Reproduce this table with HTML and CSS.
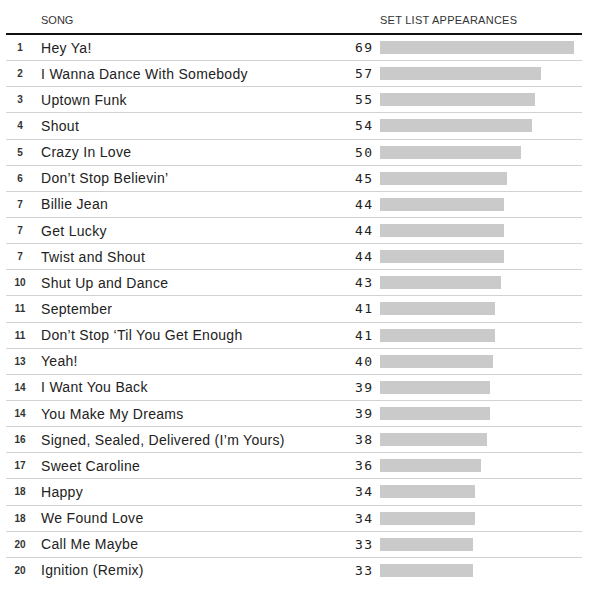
FILE: index.html
```html
<!DOCTYPE html>
<html>
<head>
<meta charset="utf-8">
<link rel="stylesheet" href="styles.css">
</head>
<body>
<div class="chart">
  <div class="head">
    <div class="h-rank"></div>
    <div class="h-song">SONG</div>
    <div class="h-num"></div>
    <div class="h-bar">SET LIST APPEARANCES</div>
  </div>
  <div class="row"><div class="rank">1</div><div class="song">Hey Ya!</div><div class="num">69</div><div class="bar-cell"><div class="bar" style="width:194px"></div></div></div>
  <div class="row"><div class="rank">2</div><div class="song">I Wanna Dance With Somebody</div><div class="num">57</div><div class="bar-cell"><div class="bar" style="width:161px"></div></div></div>
  <div class="row"><div class="rank">3</div><div class="song">Uptown Funk</div><div class="num">55</div><div class="bar-cell"><div class="bar" style="width:155px"></div></div></div>
  <div class="row"><div class="rank">4</div><div class="song">Shout</div><div class="num">54</div><div class="bar-cell"><div class="bar" style="width:152px"></div></div></div>
  <div class="row"><div class="rank">5</div><div class="song">Crazy In Love</div><div class="num">50</div><div class="bar-cell"><div class="bar" style="width:141px"></div></div></div>
  <div class="row"><div class="rank">6</div><div class="song">Don’t Stop Believin’</div><div class="num">45</div><div class="bar-cell"><div class="bar" style="width:127px"></div></div></div>
  <div class="row"><div class="rank">7</div><div class="song">Billie Jean</div><div class="num">44</div><div class="bar-cell"><div class="bar" style="width:124px"></div></div></div>
  <div class="row"><div class="rank">7</div><div class="song">Get Lucky</div><div class="num">44</div><div class="bar-cell"><div class="bar" style="width:124px"></div></div></div>
  <div class="row"><div class="rank">7</div><div class="song">Twist and Shout</div><div class="num">44</div><div class="bar-cell"><div class="bar" style="width:124px"></div></div></div>
  <div class="row"><div class="rank">10</div><div class="song">Shut Up and Dance</div><div class="num">43</div><div class="bar-cell"><div class="bar" style="width:121px"></div></div></div>
  <div class="row"><div class="rank">11</div><div class="song">September</div><div class="num">41</div><div class="bar-cell"><div class="bar" style="width:115px"></div></div></div>
  <div class="row"><div class="rank">11</div><div class="song">Don’t Stop ‘Til You Get Enough</div><div class="num">41</div><div class="bar-cell"><div class="bar" style="width:115px"></div></div></div>
  <div class="row"><div class="rank">13</div><div class="song">Yeah!</div><div class="num">40</div><div class="bar-cell"><div class="bar" style="width:113px"></div></div></div>
  <div class="row"><div class="rank">14</div><div class="song">I Want You Back</div><div class="num">39</div><div class="bar-cell"><div class="bar" style="width:110px"></div></div></div>
  <div class="row"><div class="rank">14</div><div class="song">You Make My Dreams</div><div class="num">39</div><div class="bar-cell"><div class="bar" style="width:110px"></div></div></div>
  <div class="row"><div class="rank">16</div><div class="song">Signed, Sealed, Delivered (I’m Yours)</div><div class="num">38</div><div class="bar-cell"><div class="bar" style="width:107px"></div></div></div>
  <div class="row"><div class="rank">17</div><div class="song">Sweet Caroline</div><div class="num">36</div><div class="bar-cell"><div class="bar" style="width:101px"></div></div></div>
  <div class="row"><div class="rank">18</div><div class="song">Happy</div><div class="num">34</div><div class="bar-cell"><div class="bar" style="width:95px"></div></div></div>
  <div class="row"><div class="rank">18</div><div class="song">We Found Love</div><div class="num">34</div><div class="bar-cell"><div class="bar" style="width:95px"></div></div></div>
  <div class="row"><div class="rank">20</div><div class="song">Call Me Maybe</div><div class="num">33</div><div class="bar-cell"><div class="bar" style="width:93px"></div></div></div>
  <div class="row last"><div class="rank">20</div><div class="song">Ignition (Remix)</div><div class="num">33</div><div class="bar-cell"><div class="bar" style="width:93px"></div></div></div>
</div>
</body>
</html>
```
FILE: styles.css
```css
html, body {
  margin: 0;
  padding: 0;
  background: #fff;
}
body {
  font-family: "Liberation Sans", Arial, sans-serif;
  color: #222;
}
.chart {
  margin-left: 6px;
  width: 576px;
}
.head, .row {
  display: grid;
  grid-template-columns: 28px 300px 38px 210px;
  align-items: center;
}
.head {
  height: 33px;
  border-bottom: 2px solid #111;
  box-sizing: content-box;
  align-items: end;
}
.h-song, .h-bar {
  font-size: 11px;
  line-height: 11px;
  color: #333;
  padding-bottom: 7px;
}
.h-song {
  padding-left: 7px;
}
.h-bar {
  padding-left: 8px;
  letter-spacing: 0.25px;
}
.row {
  height: 25.15px;
  border-bottom: 1px solid #d2d2d2;
}
.row.last {
  border-bottom: none;
}
.rank {
  text-align: center;
  font-size: 10px;
  font-weight: bold;
  color: #333;
}
.song {
  padding-left: 7px;
  font-size: 14px;
  letter-spacing: 0.3px;
  color: #222;
  white-space: nowrap;
}
.num {
  text-align: right;
  font-family: "DejaVu Sans Mono", monospace;
  font-size: 13px;
  letter-spacing: 1.3px;
  color: #222;
  margin-right: -1.3px;
}
.bar-cell {
  padding-left: 8px;
}
.bar {
  height: 13px;
  background: #cacaca;
}
```
